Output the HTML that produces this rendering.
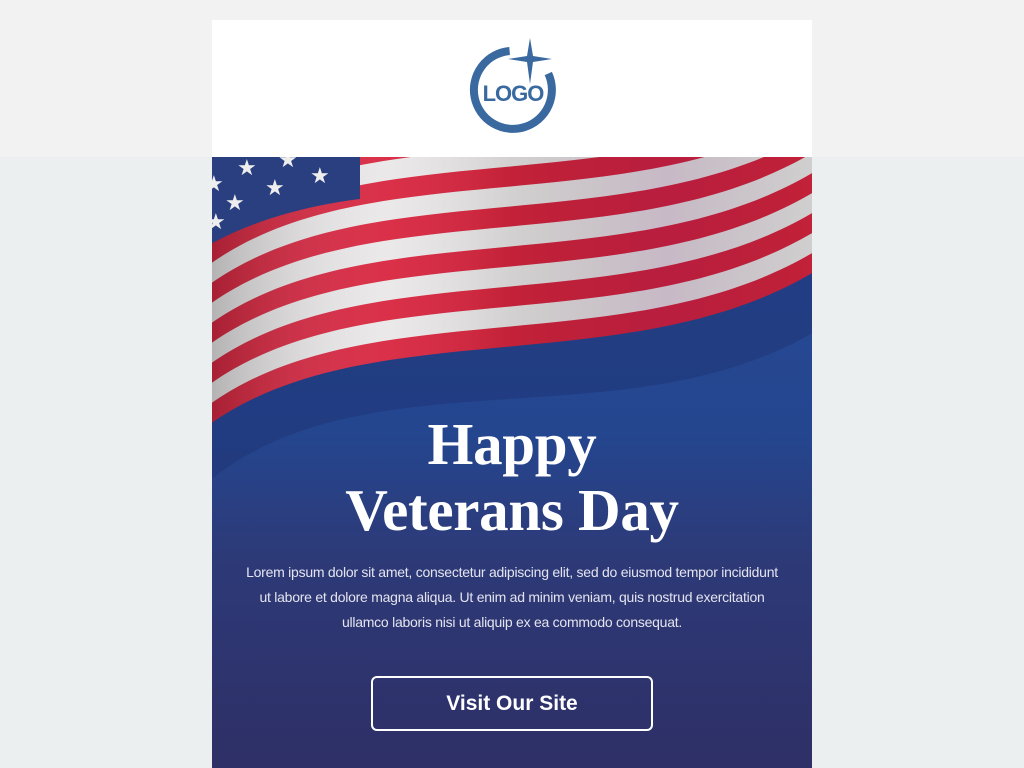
<!DOCTYPE html>
<html><head><meta charset="utf-8"><style>
body{margin:0;width:1024px;height:768px;overflow:hidden;background:#ebeff0;font-family:"Liberation Sans",sans-serif;position:relative}
.topbg{position:absolute;left:0;top:0;width:1024px;height:157px;background:#f2f2f2}
.head{position:absolute;left:212px;top:20px;width:600px;height:137px;background:#fff}
.hero{position:absolute;left:212px;top:157px;width:600px;height:611px;overflow:hidden;background:linear-gradient(180deg,#2a4a95 0%,#24468f 45%,#2d3a78 65%,#2e2f66 100%)}
h1{position:absolute;left:0;width:600px;top:254px;margin:0;text-align:center;color:#fff;font-family:"Liberation Serif",serif;font-weight:bold;font-size:59px;line-height:66px;letter-spacing:-0.3px}
p{position:absolute;left:0;width:600px;top:403px;margin:0;text-align:center;color:#e4e4ef;font-size:14px;line-height:25px;letter-spacing:-0.25px;white-space:nowrap}
.btn{position:absolute;left:159px;top:519px;width:278px;height:51px;border:2px solid #fff;border-radius:6px;color:#fff;font-weight:bold;font-size:21px;line-height:51px;text-align:center}
</style></head><body>
<div class="topbg"></div>
<div class="head">
<svg width="600" height="137" viewBox="0 0 600 137">
<path d="M297.6 31 A39 39 0 1 0 336.3 53.5" fill="none" stroke="#3a69a0" stroke-width="8"/>
<path d="M318 18 L321 36 L340 39 L321 42 L318 64 L315 42 L296 39 L315 36 Z" fill="#3a69a0"/>
<text x="301" y="81" text-anchor="middle" font-family="Liberation Sans" font-weight="bold" font-size="22" letter-spacing="-1" fill="#3a69a0">LOGO</text>
</svg>
</div>
<div class="hero">
<svg width="600" height="611" viewBox="0 0 600 611" style="position:absolute;left:0;top:0">
<defs>
<linearGradient id="sh" x1="0" x2="1" y1="0" y2="0">
<stop offset="0" stop-color="#000" stop-opacity=".25"/>
<stop offset=".3" stop-color="#fff" stop-opacity=".05"/>
<stop offset=".5" stop-color="#000" stop-opacity=".1"/>
<stop offset=".75" stop-color="#400040" stop-opacity=".2"/>
<stop offset="1" stop-color="#000" stop-opacity=".1"/>
</linearGradient>
<clipPath id="cc"><path d="M-10 -300 L148 -300 L148 42 C100 48 40 62 -10 92 Z"/></clipPath>
</defs>
<path d="M-10 -300 L610 -300 L610 170 C420 290 150 190 -10 330 Z" fill="#1f3577" opacity=".55"/>
<g>
<path d="M-10 -300 L610 -300 L610 110 C420 230 150 150 -10 273 Z" fill="#d8253f"/>
<path d="M-10 -300 L610 -300 L610 90 C420 210 150 130 -10 253 Z" fill="#e9e7e7"/>
<path d="M-10 -300 L610 -300 L610 70 C420 190 150 110 -10 233 Z" fill="#d8253f"/>
<path d="M-10 -300 L610 -300 L610 50 C420 170 150 90 -10 213 Z" fill="#e9e7e7"/>
<path d="M-10 -300 L610 -300 L610 30 C420 150 150 70 -10 193 Z" fill="#d8253f"/>
<path d="M-10 -300 L610 -300 L610 10 C420 130 150 50 -10 173 Z" fill="#e9e7e7"/>
<path d="M-10 -300 L610 -300 L610 -10 C420 110 150 30 -10 153 Z" fill="#d8253f"/>
<path d="M-10 -300 L610 -300 L610 -30 C420 90 150 10 -10 133 Z" fill="#e9e7e7"/>
<path d="M-10 -300 L610 -300 L610 -50 C420 70 150 -10 -10 113 Z" fill="#d8253f"/>
<path d="M-10 -300 L610 -300 L610 -70 C420 50 150 -30 -10 93 Z" fill="#e9e7e7"/>
<path d="M-10 -300 L610 -300 L610 -90 C420 30 150 -50 -10 73 Z" fill="#d8253f"/>
<path d="M-10 -300 L610 -300 L610 -110 C420 10 150 -70 -10 53 Z" fill="#e9e7e7"/>
<path d="M-10 -300 L610 -300 L610 -130 C420 -10 150 -90 -10 33 Z" fill="#d8253f"/>
<path d="M-10 -300 L610 -300 L610 -150 C420 -30 150 -110 -10 13 Z" fill="#e9e7e7"/>
</g>
<path d="M-10 -300 L610 -300 L610 110 C420 230 150 150 -10 273 Z" fill="url(#sh)"/>
<rect x="-10" y="-10" width="200" height="200" fill="#2a3f80" clip-path="url(#cc)"/>
<g fill="#eeeeee" font-size="22" font-family="DejaVu Sans">
<text x="25" y="18">★</text><text x="66" y="10">★</text><text x="98" y="26">★</text>
<text x="53" y="38">★</text><text x="13" y="53">★</text><text x="-6" y="72">★</text><text x="-8" y="34">★</text>
</g>
</svg>
<h1>Happy<br>Veterans Day</h1>
<p>Lorem ipsum dolor sit amet, consectetur adipiscing elit, sed do eiusmod tempor incididunt<br>ut labore et dolore magna aliqua. Ut enim ad minim veniam, quis nostrud exercitation<br>ullamco laboris nisi ut aliquip ex ea commodo consequat.</p>
<div class="btn">Visit Our Site</div>
</div>
</body></html>
